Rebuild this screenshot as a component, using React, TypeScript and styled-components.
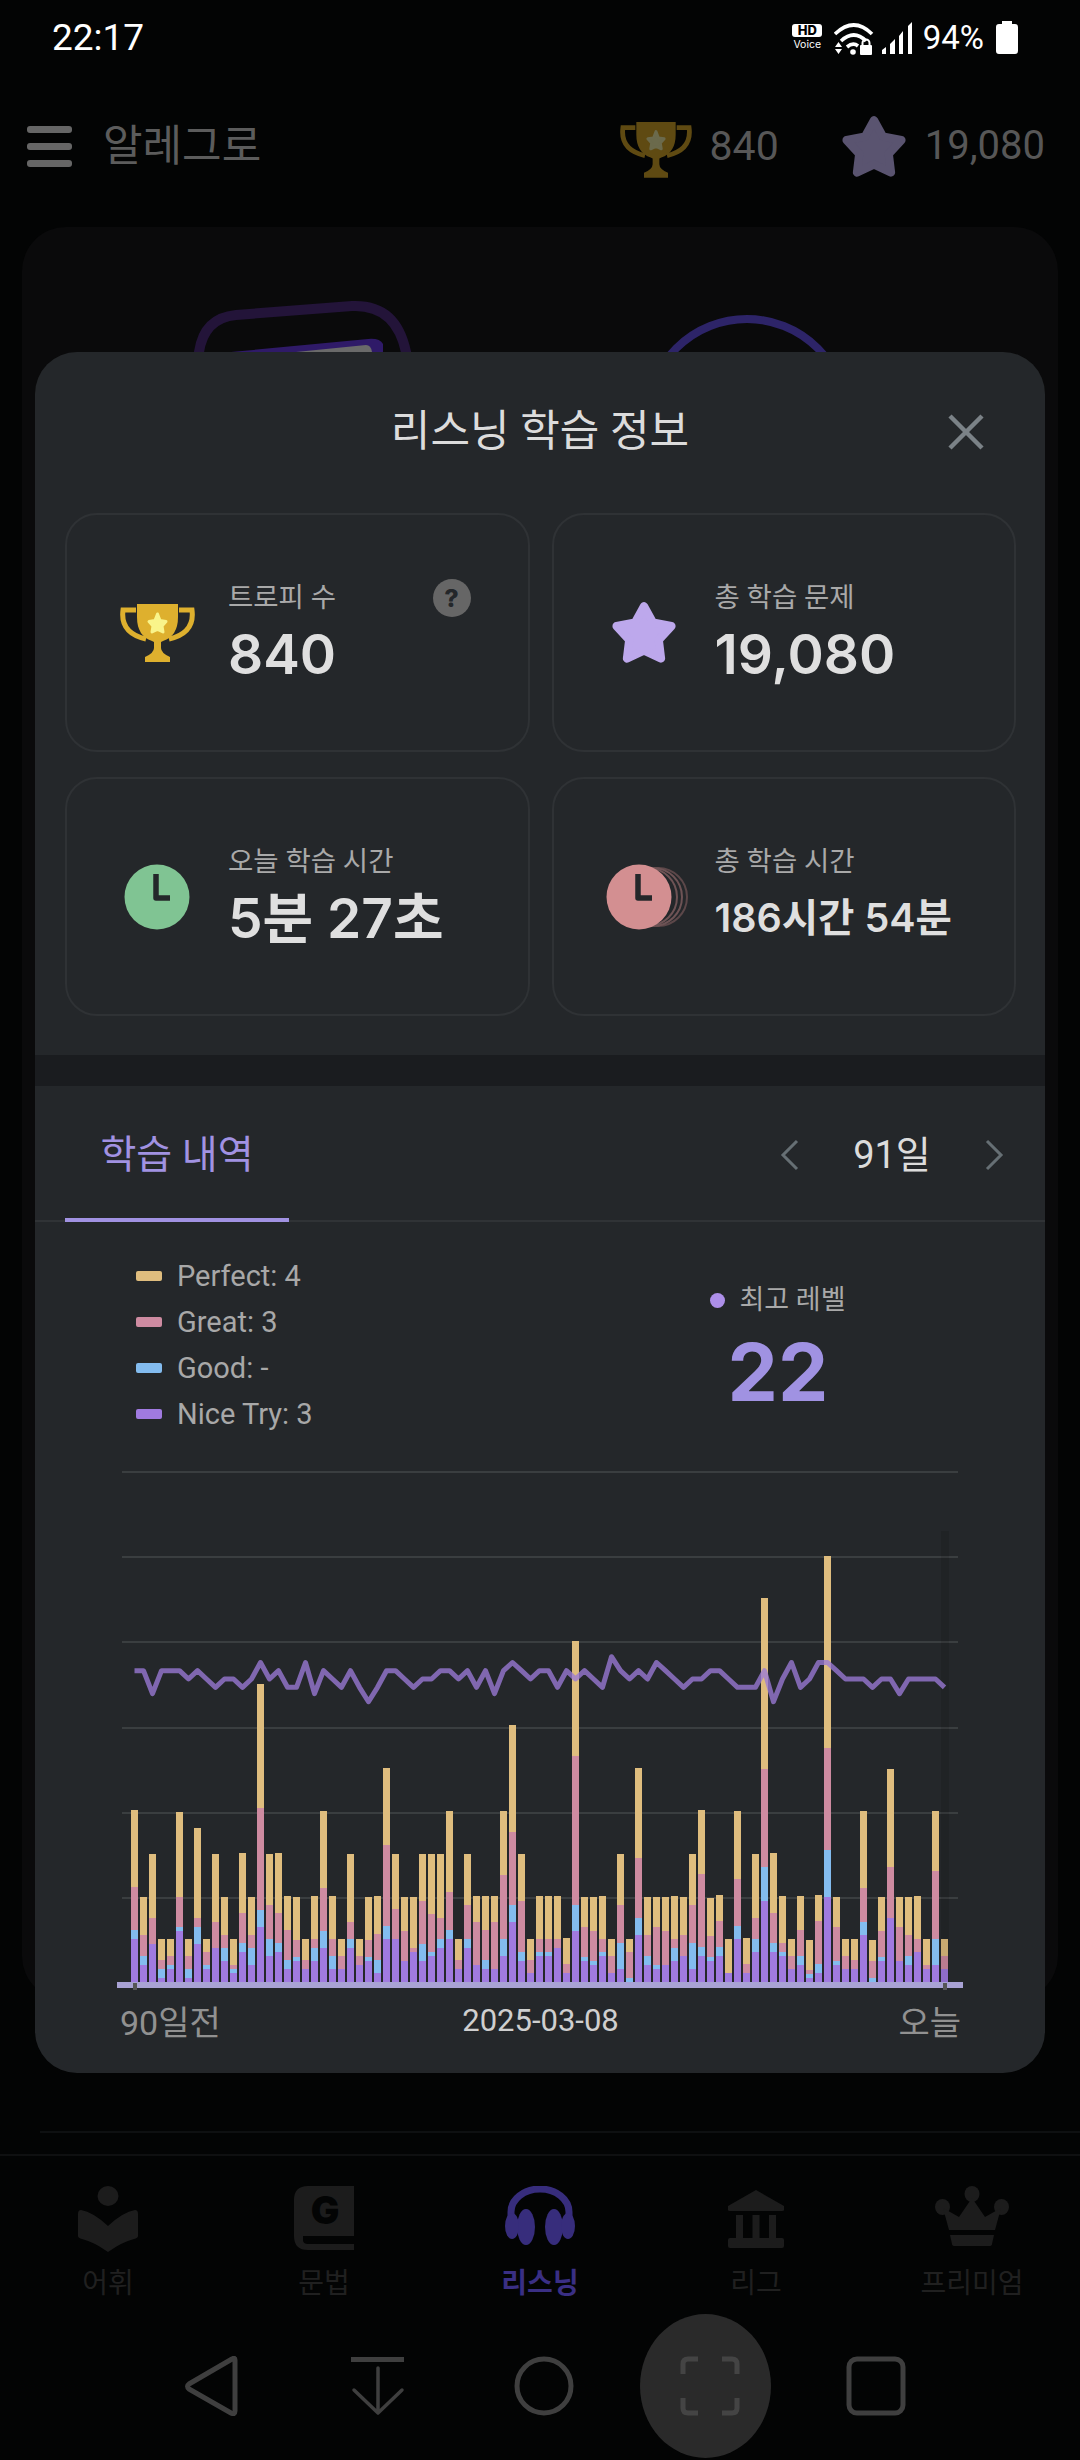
import React from 'react';
import styled, { createGlobalStyle } from 'styled-components';

const KR = `Roboto, "Noto Sans CJK KR", sans-serif`;
const NUM = `Inter, "Noto Sans CJK KR", sans-serif`;

const GlobalStyle = createGlobalStyle`
  html, body {
    margin: 0;
    padding: 0;
    background: #030404;
    font-family: ${KR};
  }
  * { box-sizing: border-box; }
`;

// Cumulative stack heights per day: nice try, good, great, perfect
const DAYS: number[][] = [
  [43,52,95,172],[17,26,47,85],[38,38,64,128],[4,13,22,43],[13,17,26,43],[51,55,85,170],[4,13,26,43],[38,55,64,154],
  [13,17,30,43],[34,34,60,128],[21,34,47,85],[9,13,17,43],[30,39,69,129],[17,34,47,85],[55,72,174,298],[26,43,77,128],
  [30,39,69,129],[13,22,52,86],[21,25,42,85],[13,13,22,43],[21,34,43,86],[34,51,94,171],[13,26,43,86],[13,13,26,43],
  [34,43,60,128],[17,17,26,43],[21,25,42,85],[9,22,48,86],[43,56,137,214],[43,43,73,128],[21,21,51,85],[30,30,34,85],
  [21,38,81,128],[26,30,68,128],[34,43,64,128],[43,52,90,171],[13,13,22,43],[34,43,77,128],[17,17,60,86],[13,22,52,86],
  [13,13,60,86],[26,43,107,171],[60,77,150,257],[21,30,81,128],[9,9,22,43],[26,30,43,86],[26,30,43,86],[34,34,43,86],
  [9,9,18,44],[51,77,226,341],[21,25,55,85],[17,21,51,85],[26,30,43,86],[9,9,26,43],[13,39,77,128],[0,4,30,43],
  [47,64,124,214],[17,26,47,85],[13,17,55,85],[17,17,51,85],[21,34,43,86],[26,26,47,85],[13,39,77,128],[26,35,108,172],
  [21,25,46,84],[26,35,61,87],[9,9,9,43],[43,56,103,171],[9,9,18,44],[30,43,64,128],[81,115,213,384],[30,39,69,129],
  [26,30,39,86],[13,13,26,43],[17,26,52,86],[4,8,12,42],[9,18,61,87],[85,132,234,426],[17,21,55,85],[13,13,26,43],
  [13,13,22,43],[47,60,94,171],[0,4,21,42],[21,25,51,85],[64,64,115,213],[21,21,55,85],[17,26,47,85],[30,30,43,86],
  [13,13,17,43],[17,43,111,171],[13,13,26,43],
];

const LEVEL_Y: Record<string, number> = { A: 1656.7, B: 1662.5, C: 1670.7, D: 1679, E: 1687.3, F: 1693.6, G: 1701.7 };
const LEVELS = 'CCFCCCDCDEDDEDBDCEEBFCDECEGECCDEDDCCDCECFCBCDCCECDCDEACDCDBCDEDDCCDEEECGDBEDBBCDDDEDDFDDDDE';

const BAR_COLORS = ['#a07ae0', '#83bcef', '#ce8ba1', '#dfbd7e'];
const GRID_Y = [1471, 1556, 1641, 1727, 1812, 1897];
const BASE_Y = 1982;

const LEGEND = [
  { name: 'Perfect', value: '4', color: '#dfbd7e' },
  { name: 'Great', value: '3', color: '#ce8ba1' },
  { name: 'Good', value: '-', color: '#83bcef' },
  { name: 'Nice Try', value: '3', color: '#a07ae0' },
];

const Page = styled.div`
  position: relative;
  width: 1080px;
  height: 2460px;
  overflow: hidden;
  background: #030404;
`;

const StatusBar = styled.div`
  display: flex;
  align-items: center;
  justify-content: space-between;
  height: 75px;
  padding: 0 62px 0 52px;
  color: #fff;
`;

const Clock = styled.span`
  font-size: 37px;
  line-height: 75px;
`;

const StatusIcons = styled.div`
  display: flex;
  align-items: center;
`;

const HdBadge = styled.div`
  display: flex;
  flex-direction: column;
  align-items: center;
  width: 31px;
  margin-right: 11px;
`;

const HdMark = styled.span`
  width: 30px;
  height: 13px;
  border-radius: 3px;
  background: #fff;
  color: #000;
  font: 800 13px/13px ${NUM};
  text-align: center;
`;

const VoiceMark = styled.span`
  margin-top: 1px;
  font: 400 10.5px/13px ${NUM};
`;

const BatteryText = styled.span`
  margin: 0 12px 0 9px;
  font-size: 33px;
  line-height: 40px;
`;

const TopBar = styled.div`
  display: flex;
  align-items: center;
  height: 142px;
  padding: 0 35px 0 27px;
`;

const Burger = styled.div`
  display: flex;
  flex-direction: column;
  gap: 10px;
  width: 45px;
  margin-right: 31px;
`;

const BurgerLine = styled.span`
  height: 7px;
  border-radius: 3px;
  background: #666;
`;

const AppTitle = styled.span`
  flex: 1;
  color: #5c5c5c;
  font-size: 43px;
  line-height: 60px;
`;

const Score = styled.div<{ $gap: number }>`
  display: flex;
  align-items: center;
  gap: 18px;
  margin-left: ${p => p.$gap}px;
`;

const TrophySlot = styled.span`
  display: flex;
  padding-top: 8px;
`;

const ScoreText = styled.span<{ $size: number }>`
  color: #575757;
  font-size: ${p => p.$size}px;
  line-height: 50px;
`;

const BackCard = styled.div`
  height: 1773px;
  margin: 10px 22px 0;
  border-radius: 44px;
  background: #0a0a0b;
`;

const Illustrations = styled.div`
  display: flex;
  gap: 226px;
  padding: 73px 0 0 172px;
`;

const FaintRule = styled.div`
  height: 2px;
  margin: 131px 0 0 40px;
  background: #0e1011;
`;

const TabBar = styled.nav`
  display: grid;
  grid-template-columns: repeat(5, 216px);
  height: 149px;
  margin-top: 21px;
  padding-top: 30px;
  border-top: 2px solid #0f1011;
`;

const TabItem = styled.div`
  display: flex;
  flex-direction: column;
  align-items: center;
`;

const TabIcon = styled.div`
  display: flex;
  align-items: flex-start;
  justify-content: center;
  height: 70px;
`;

const TabLabel = styled.span<{ $active?: boolean }>`
  margin-top: 8px;
  color: ${p => (p.$active ? '#3a2f85' : '#202020')};
  font-size: 28px;
  font-weight: ${p => (p.$active ? 700 : 400)};
  line-height: 40px;
`;

const SystemBar = styled.div`
  display: grid;
  grid-template-columns: repeat(5, 166px);
  height: 144px;
  margin-top: 11px;
  padding-left: 129px;
`;

const SystemKey = styled.div`
  display: flex;
  align-items: center;
  justify-content: center;
`;

const CaptureKey = styled(SystemKey)`
  position: relative;

  &::before {
    content: '';
    position: absolute;
    left: 13px;
    top: 0;
    width: 131px;
    height: 144px;
    border-radius: 50%;
    background: #2a2a2a;
  }

  svg {
    position: relative;
  }
`;

const Modal = styled.section`
  position: absolute;
  left: 35px;
  top: 352px;
  width: 1010px;
  height: 1721px;
  border-radius: 42px;
  background: #24272a;
  overflow: hidden;
`;

const ModalHeader = styled.header`
  position: relative;
  height: 161px;
  padding-top: 51px;
  color: #dcdcdc;
  font-size: 43px;
  line-height: 56px;
  text-align: center;
`;

const CloseButton = styled.button`
  position: absolute;
  right: 61px;
  top: 62px;
  display: flex;
  padding: 0;
  border: 0;
  background: none;
`;

const StatGrid = styled.div`
  display: grid;
  grid-template-columns: 1fr 1fr;
  grid-auto-rows: 239px;
  gap: 25px 22px;
  padding: 0 29px 0 30px;
`;

const StatCard = styled.div`
  position: relative;
  display: flex;
  align-items: center;
  gap: 21px;
  padding-left: 40px;
  border: 2px solid #2f3235;
  border-radius: 32px;
`;

const StatIcon = styled.div`
  display: flex;
  justify-content: center;
  flex: none;
  width: 100px;
`;

const StatText = styled.div`
  margin-top: 3px;
`;

const StatLabel = styled.div`
  color: #a9a9a9;
  font-size: 27.5px;
  line-height: 40px;
`;

const StatValue = styled.div<{ $small?: boolean }>`
  height: 72px;
  color: #dfdfdf;
  font: 600 ${p => (p.$small ? 39.5 : 55)}px/72px ${NUM};
`;

const HelpBadge = styled.span`
  position: absolute;
  right: 57px;
  top: 64px;
  width: 38px;
  height: 38px;
  border-radius: 50%;
  background: #666;
  color: #24272a;
  font: 800 25px/38px ${NUM};
  text-align: center;
`;

const SectionGap = styled.div`
  height: 31px;
  margin-top: 39px;
  background: #1a1c1f;
`;

const HistoryTabs = styled.div`
  display: flex;
  align-items: stretch;
  justify-content: space-between;
  height: 136px;
  padding-left: 30px;
  border-bottom: 2px solid #303336;
`;

const HistoryTab = styled.div`
  width: 224px;
  height: 136px;
  padding-top: 41px;
  border-bottom: 4px solid #a192e2;
  color: #a192e2;
  font-size: 39px;
  line-height: 56px;
  text-align: center;
`;

const RangePicker = styled.div`
  display: flex;
  align-items: center;
  height: 134px;
  padding: 4px 41px 0 0;
`;

const RangeText = styled.span`
  width: 184px;
  color: #dcdcdc;
  font-size: 38px;
  line-height: 56px;
  text-align: center;
`;

const Summary = styled.div`
  display: flex;
  height: 238px;
  padding: 31px 0 0 101px;
`;

const Legend = styled.ul`
  width: 574px;
  margin: 0;
  padding: 0;
  list-style: none;
`;

const LegendRow = styled.li`
  display: flex;
  align-items: center;
  gap: 15px;
  height: 46px;
  color: #a8a8a8;
  font-size: 29px;
`;

const Swatch = styled.span<{ $color: string }>`
  width: 26px;
  height: 10px;
  border-radius: 2px;
  background: ${p => p.$color};
`;

const Best = styled.div`
  display: flex;
  flex-direction: column;
  align-items: center;
  width: 136px;
  margin-top: 28px;
`;

const BestLabel = styled.div`
  display: flex;
  align-items: center;
  gap: 14px;
  color: #a9a9a9;
  font-size: 27px;
  line-height: 38px;
  white-space: nowrap;
`;

const BestDot = styled.span`
  width: 15px;
  height: 15px;
  border-radius: 50%;
  background: #ad8fe9;
`;

const BestValue = styled.div`
  margin-top: 12px;
  color: #a092e2;
  font: 700 80px/82px ${NUM};
`;

const ChartSvg = styled.svg`
  display: block;
`;

const AxisLabels = styled.div`
  display: grid;
  grid-template-columns: 1fr auto 1fr;
  align-items: center;
  height: 50px;
  margin-top: 5px;
  padding: 0 84px 0 85px;
`;

const AxisEnd = styled.span<{ $right?: boolean }>`
  color: #919191;
  font-size: 34px;
  text-align: ${p => (p.$right ? 'right' : 'left')};
`;

const AxisDate = styled.span`
  color: #cfcfcf;
  font-size: 31px;
`;

const Star = ({ size, color }: { size: number; color: string }) => (
  <svg width={size} height={size * 0.94} viewBox="0 0 64 60">
    <polygon
      points="32,5 40.8,20.9 58.6,24.3 46.3,37.6 48.5,55.7 32,48 15.5,55.7 17.7,37.6 5.4,24.3 23.2,20.9"
      fill={color}
      stroke={color}
      strokeWidth="8"
      strokeLinejoin="round"
    />
  </svg>
);

const Trophy = ({ width, cup, star }: { width: number; cup: string; star: string }) => (
  <svg width={width} height={width * 0.8} viewBox="0 0 75 60">
    <path d="M16 7H3Q0 30 26 36M59 7H72Q75 30 49 36" fill="none" stroke={cup} strokeWidth="5" />
    <path d="M17 1H58V14Q58 33 43 38L41 39V45Q41 50 50 54V59H25V54Q34 50 34 45V39L32 38Q17 33 17 14Z" fill={cup} />
    <polygon
      points="37.5,11 40,17.5 46,18.5 42,23 43,29 37.5,26.5 32,29 33,23 29,18.5 35,17.5"
      fill={star}
      stroke={star}
      strokeWidth="3"
      strokeLinejoin="round"
    />
  </svg>
);

const GreenClock = () => (
  <svg width="66" height="66" viewBox="0 0 66 66">
    <circle cx="33" cy="33" r="32.5" fill="#80c493" />
    <path d="M32 10V34H46" fill="none" stroke="#24272a" strokeWidth="5.5" strokeLinejoin="round" />
  </svg>
);

const StackedClock = () => (
  <svg width="92" height="66" viewBox="-8 0 92 66">
    <circle cx="52" cy="33" r="29" fill="#24272a" stroke="#5c4749" strokeWidth="2" />
    <circle cx="47" cy="33" r="29" fill="#24272a" stroke="#6e5355" strokeWidth="2" />
    <circle cx="42" cy="33" r="29" fill="#24272a" stroke="#6e5355" strokeWidth="2" />
    <circle cx="33" cy="33" r="32.5" fill="#d38f91" />
    <path d="M32 10V34H46" fill="none" stroke="#24272a" strokeWidth="5.5" strokeLinejoin="round" />
  </svg>
);

const Chevron = ({ flip }: { flip?: boolean }) => (
  <svg width="20" height="32" viewBox="0 0 20 32">
    <path d={flip ? 'M3 2L17 16L3 30' : 'M17 2L3 16L17 30'} fill="none" stroke="#666f74" strokeWidth="3" />
  </svg>
);

const HistoryChart = () => {
  const line = DAYS.map((_, i) => `${134.5 + i * 9},${LEVEL_Y[LEVELS[i]]}`).join(' ');
  return (
    <ChartSvg width="1010" height="530" viewBox="35 1460 1010 530">
      {GRID_Y.map(y => (
        <rect key={y} x="122" y={y} width="836" height="2" fill="#3a3e40" />
      ))}
      {DAYS.map((stack, i) =>
        stack.map((top, s) => {
          const bottom = s === 0 ? 0 : stack[s - 1];
          if (top === bottom) return null;
          return (
            <rect
              key={`${i}-${s}`}
              x={131 + i * 9}
              y={BASE_Y - top}
              width="7"
              height={top - bottom}
              fill={BAR_COLORS[s]}
            />
          );
        })
      )}
      <rect x="941" y="1531" width="8" height="451" fill="#000" opacity="0.1" />
      <polyline points={line} fill="none" stroke="#9a7ad6" strokeOpacity="0.78" strokeWidth="5" strokeLinejoin="round" />
      <rect x="117" y={BASE_Y} width="846" height="6" fill="#a8a2d4" />
      <rect x="133" y={BASE_Y + 1} width="4" height="12" fill="#555" />
      <rect x="943" y={BASE_Y + 1} width="4" height="12" fill="#555" />
    </ChartSvg>
  );
};

const NAV_FILL = '#1c1c1c';

const App: React.FC = () => {
  return (
    <Page>
      <GlobalStyle />
      <StatusBar>
        <Clock>22:17</Clock>
        <StatusIcons>
          <HdBadge>
            <HdMark>HD</HdMark>
            <VoiceMark>Voice</VoiceMark>
          </HdBadge>
          <svg width="45" height="34" viewBox="0 0 45 34">
            <path d="M1 13Q20 -5 38 13" fill="none" stroke="#fff" strokeWidth="3.6" />
            <path d="M7 20Q20 8 32 20" fill="none" stroke="#fff" strokeWidth="3.6" />
            <path d="M13 26Q19 21 24 25" fill="none" stroke="#fff" strokeWidth="3.6" />
            <circle cx="19" cy="31" r="2.8" fill="#fff" />
            <path d="M1 26L4.5 21L8 26ZM1 28H8L4.5 33Z" fill="#fff" />
            <rect x="26" y="24" width="12" height="10" rx="1" fill="#fff" />
            <path d="M28.5 25V22A3.5 3.5 0 0 1 35.5 22V25" fill="none" stroke="#fff" strokeWidth="2" />
          </svg>
          <svg width="33" height="34" viewBox="0 0 33 34" style={{ marginLeft: 2 }}>
            <path d="M1 33V29L5 26V33ZM9 33V23L14 18V33ZM18 33V15L22 10V33ZM27 33V5L31 1V33Z" fill="#fff" />
          </svg>
          <BatteryText>94%</BatteryText>
          <svg width="22" height="33" viewBox="0 0 22 33">
            <path d="M6 0H16V3H19A3 3 0 0 1 22 6V30A3 3 0 0 1 19 33H3A3 3 0 0 1 0 30V6A3 3 0 0 1 3 3H6Z" fill="#fff" />
          </svg>
        </StatusIcons>
      </StatusBar>

      <TopBar>
        <Burger>
          <BurgerLine />
          <BurgerLine />
          <BurgerLine />
        </Burger>
        <AppTitle>알레그로</AppTitle>
        <Score $gap={0}>
          <TrophySlot>
            <Trophy width={72} cup="#5f4a12" star="#6b6a4c" />
          </TrophySlot>
          <ScoreText $size={41}>840</ScoreText>
        </Score>
        <Score $gap={62}>
          <Star size={66} color="#5a5470" />
          <ScoreText $size={40}>19,080</ScoreText>
        </Score>
      </TopBar>

      <BackCard>
        <Illustrations>
          <svg width="220" height="60" viewBox="194 300 220 60">
            <path d="M199 360V352Q204 318 236 315L352 306Q396 304 406 352V360" fill="none" stroke="#231439" strokeWidth="10" />
            <path d="M231 352L368 339Q380 338 383 344V360H231Z" fill="#2f1a68" />
            <path d="M296 352L366 345Q371 345 372 352V360H296Z" fill="#6a6a6a" />
          </svg>
          <svg width="214" height="60" viewBox="640 300 214 60">
            <circle cx="747" cy="419" r="100" fill="none" stroke="#2d2468" strokeWidth="8" />
          </svg>
        </Illustrations>
      </BackCard>

      <FaintRule />

      <TabBar>
        <TabItem>
          <TabIcon>
            <svg width="60" height="66" viewBox="0 0 60 66">
              <ellipse cx="30" cy="10" rx="10.5" ry="10" fill={NAV_FILL} />
              <path d="M3 24Q15 26 30 40Q45 26 57 24Q60 24 60 28V50Q60 52 56 53Q44 56 30 66Q16 56 4 53Q0 52 0 50V28Q0 24 3 24Z" fill={NAV_FILL} />
            </svg>
          </TabIcon>
          <TabLabel>어휘</TabLabel>
        </TabItem>
        <TabItem>
          <TabIcon>
            <svg width="60" height="66" viewBox="0 0 60 66">
              <path d="M14 0H60V50H14Q9 50 9 54Q9 58 14 58H60V64H14Q0 64 0 50V14Q0 0 14 0Z" fill={NAV_FILL} />
              <rect x="9" y="50" width="51" height="5" fill="#030404" />
              <text x="31" y="38" textAnchor="middle" fontFamily={NUM} fontSize="38" fontWeight="900" fill="#030404">G</text>
            </svg>
          </TabIcon>
          <TabLabel>문법</TabLabel>
        </TabItem>
        <TabItem>
          <TabIcon>
            <svg width="70" height="60" viewBox="0 0 70 60">
              <path d="M6 34V26A29 23 0 0 1 64 26V34" fill="none" stroke="#372d7c" strokeWidth="7" />
              <ellipse cx="21" cy="41" rx="9" ry="18" fill="#372d7c" />
              <ellipse cx="49" cy="41" rx="9" ry="18" fill="#372d7c" />
              <ellipse cx="7" cy="40" rx="7" ry="13" fill="#372d7c" />
              <ellipse cx="63" cy="40" rx="7" ry="13" fill="#372d7c" />
            </svg>
          </TabIcon>
          <TabLabel $active>리스닝</TabLabel>
        </TabItem>
        <TabItem>
          <TabIcon>
            <svg width="60" height="62" viewBox="0 0 60 62">
              <path d="M30 4L58 20V24Q58 25 56 25H4Q2 25 2 24V20Z" fill={NAV_FILL} />
              <path d="M10 29H17V52H10ZM26.5 29H33.5V52H26.5ZM43 29H50V52H43Z" fill={NAV_FILL} />
              <rect x="2" y="52" width="56" height="10" rx="2" fill={NAV_FILL} />
            </svg>
          </TabIcon>
          <TabLabel>리그</TabLabel>
        </TabItem>
        <TabItem>
          <TabIcon>
            <svg width="74" height="60" viewBox="0 0 74 60">
              <ellipse cx="37" cy="8" rx="7.5" ry="8" fill={NAV_FILL} />
              <ellipse cx="7.5" cy="21" rx="7.5" ry="8" fill={NAV_FILL} />
              <ellipse cx="66.5" cy="21" rx="7.5" ry="8" fill={NAV_FILL} />
              <path d="M37 12L50 31L66 22L60 44H14L8 22L24 31Z" fill={NAV_FILL} />
              <path d="M15 49H59L57 58Q57 60 54 60H20Q17 60 17 58Z" fill={NAV_FILL} />
            </svg>
          </TabIcon>
          <TabLabel>프리미엄</TabLabel>
        </TabItem>
      </TabBar>

      <SystemBar>
        <SystemKey>
          <svg width="54" height="60" viewBox="0 0 54 60">
            <path d="M50 4Q50 1 47 3L4 28Q1 30 4 33L46 57Q50 59 50 55Z" fill="none" stroke="#3f3f3f" strokeWidth="5" strokeLinejoin="round" />
          </svg>
        </SystemKey>
        <SystemKey>
          <svg width="54" height="60" viewBox="0 0 54 60">
            <rect x="0" y="1" width="53" height="5" fill="#3f3f3f" />
            <path d="M27 12V56M3 34L27 57L51 34" fill="none" stroke="#3f3f3f" strokeWidth="3.5" strokeLinecap="round" strokeLinejoin="round" />
          </svg>
        </SystemKey>
        <SystemKey>
          <svg width="60" height="60" viewBox="0 0 60 60">
            <circle cx="30" cy="30" r="27" fill="none" stroke="#3f3f3f" strokeWidth="5" />
          </svg>
        </SystemKey>
        <CaptureKey>
          <svg width="60" height="60" viewBox="0 0 60 60">
            <path d="M18 3H8Q3 3 3 8V18M42 3H52Q57 3 57 8V18M18 57H8Q3 57 3 52V42M42 57H52Q57 57 57 52V42" fill="none" stroke="#444" strokeWidth="5" />
          </svg>
        </CaptureKey>
        <SystemKey>
          <svg width="60" height="60" viewBox="0 0 60 60">
            <rect x="3" y="3" width="54" height="54" rx="8" fill="none" stroke="#3f3f3f" strokeWidth="5" />
          </svg>
        </SystemKey>
      </SystemBar>

      <Modal>
        <ModalHeader>
          리스닝 학습 정보
          <CloseButton>
            <svg width="36" height="36" viewBox="0 0 36 36">
              <path d="M2 2L34 34M34 2L2 34" fill="none" stroke="#7b8287" strokeWidth="4.5" />
            </svg>
          </CloseButton>
        </ModalHeader>

        <StatGrid>
          <StatCard>
            <StatIcon>
              <Trophy width={75} cup="#deb02e" star="#f9f48a" />
            </StatIcon>
            <StatText>
              <StatLabel>트로피 수</StatLabel>
              <StatValue>840</StatValue>
            </StatText>
            <HelpBadge>?</HelpBadge>
          </StatCard>
          <StatCard>
            <StatIcon>
              <Star size={66} color="#bda8ec" />
            </StatIcon>
            <StatText>
              <StatLabel>총 학습 문제</StatLabel>
              <StatValue>19,080</StatValue>
            </StatText>
          </StatCard>
          <StatCard>
            <StatIcon>
              <GreenClock />
            </StatIcon>
            <StatText>
              <StatLabel>오늘 학습 시간</StatLabel>
              <StatValue>5분 27초</StatValue>
            </StatText>
          </StatCard>
          <StatCard>
            <StatIcon>
              <StackedClock />
            </StatIcon>
            <StatText>
              <StatLabel>총 학습 시간</StatLabel>
              <StatValue $small>186시간 54분</StatValue>
            </StatText>
          </StatCard>
        </StatGrid>

        <SectionGap />

        <HistoryTabs>
          <HistoryTab>학습 내역</HistoryTab>
          <RangePicker>
            <Chevron />
            <RangeText>91일</RangeText>
            <Chevron flip />
          </RangePicker>
        </HistoryTabs>

        <Summary>
          <Legend>
            {LEGEND.map(item => (
              <LegendRow key={item.name}>
                <Swatch $color={item.color} />
                {item.name}: {item.value}
              </LegendRow>
            ))}
          </Legend>
          <Best>
            <BestLabel>
              <BestDot />
              최고 레벨
            </BestLabel>
            <BestValue>22</BestValue>
          </Best>
        </Summary>

        <HistoryChart />

        <AxisLabels>
          <AxisEnd>90일전</AxisEnd>
          <AxisDate>2025-03-08</AxisDate>
          <AxisEnd $right>오늘</AxisEnd>
        </AxisLabels>
      </Modal>
    </Page>
  );
};

export default App;
